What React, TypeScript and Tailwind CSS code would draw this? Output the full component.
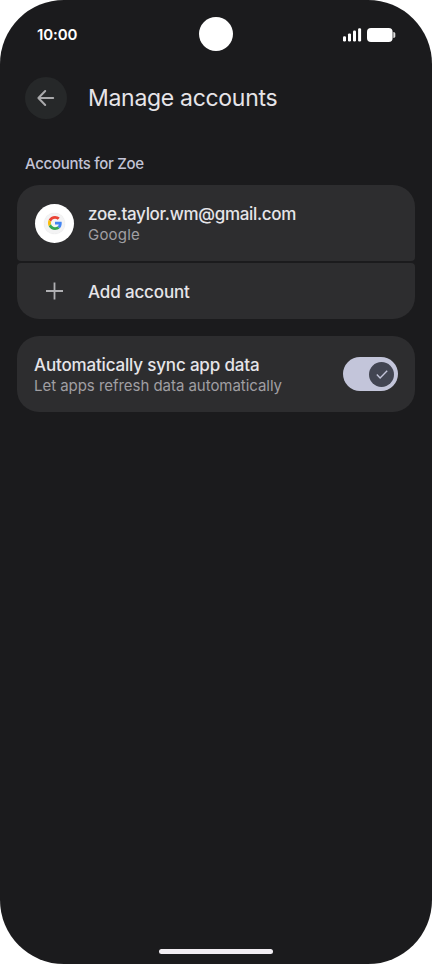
const StatusBar = () => (
  <div className="grid h-[34px] grid-cols-3 items-center pl-[37px] pr-[36px]">
    <span className="pt-0.5 text-[15px] font-semibold tracking-[-0.1px] text-white">10:00</span>
    <div className="size-[34px] justify-self-center rounded-full bg-white" />
    <div className="flex items-center justify-end gap-[5px] pt-px">
      <svg width="19" height="14" viewBox="0 0 19 14" fill="#fff">
        <rect x="0" y="8.2" width="3" height="5.2" rx="1.2" />
        <rect x="5" y="5.4" width="3" height="8" rx="1.2" />
        <rect x="10" y="2.6" width="3" height="10.8" rx="1.2" />
        <rect x="15.1" y="0.3" width="3" height="13.1" rx="1.2" />
      </svg>
      <svg width="29" height="14" viewBox="0 0 29 14" fill="#fff">
        <rect x="0" y="0" width="25.6" height="14" rx="4" />
        <path d="M26.3 4v6c1.4-.1 2-.8 2-1.8V5.8c0-1-.6-1.7-2-1.8z" opacity="0.85" />
      </svg>
    </div>
  </div>
)

const GoogleLogo = () => (
  <svg width="14" height="14" viewBox="0 0 48 48">
    <path fill="#EA4335" d="M24 9.5c3.54 0 6.71 1.22 9.21 3.6l6.85-6.85C35.9 2.38 30.47 0 24 0 14.62 0 6.51 5.38 2.56 13.22l7.98 6.19C12.43 13.72 17.74 9.5 24 9.5z" />
    <path fill="#4285F4" d="M46.98 24.55c0-1.57-.15-3.09-.38-4.55H24v9.02h12.94c-.58 2.96-2.26 5.48-4.78 7.18l7.73 6c4.51-4.18 7.09-10.36 7.09-17.65z" />
    <path fill="#FBBC05" d="M10.53 28.59c-.48-1.45-.76-2.99-.76-4.59s.27-3.14.76-4.59l-7.98-6.19C.92 16.46 0 20.12 0 24c0 3.88.92 7.54 2.56 10.78l7.97-6.19z" />
    <path fill="#34A853" d="M24 48c6.48 0 11.93-2.13 15.89-5.81l-7.73-6c-2.15 1.45-4.92 2.3-8.16 2.3-6.26 0-11.57-4.22-13.47-9.91l-7.98 6.19C6.51 42.62 14.62 48 24 48z" />
  </svg>
)

const App = () => {
  return (
    <div className="min-h-screen bg-white">
      <div className="flex h-[964px] w-[432px] flex-col overflow-hidden rounded-[64px] bg-[#1b1b1d] pt-[17px] font-['Inter',sans-serif]">
        <StatusBar />

        <header className="mt-[26px] flex items-center gap-[21px] pl-[25px]">
          <button className="flex size-[42px] items-center justify-center rounded-full bg-[#262829]">
            <svg width="18" height="18" viewBox="0 0 18 18" fill="none" stroke="#a9a9ab" strokeWidth="2" strokeLinecap="round" strokeLinejoin="round">
              <path d="M16.2 9H1.6M8.2 2L1.4 9l6.8 7" />
            </svg>
          </button>
          <h1 className="text-[23px] leading-[30px] tracking-[-0.3px] text-[#e6e4e8]">Manage accounts</h1>
        </header>

        <h2 className="mt-[35px] pl-[25px] text-[15px] leading-5 font-medium tracking-[-0.3px] text-[#c2c3d6]">Accounts for Zoe</h2>

        <div className="mx-[17px] mt-[11px] flex flex-col gap-[2px]">
          <div className="flex h-[76px] items-center gap-[14px] rounded-t-[22px] rounded-b-[4px] bg-[#2d2d2f] pl-[18px]">
            <div className="flex size-[39px] items-center justify-center rounded-full bg-white">
              <div className="flex size-[21px] items-center justify-center rounded-full bg-[#f3f3f4] shadow-[0_0_1px_rgba(0,0,0,0.15)]">
                <GoogleLogo />
              </div>
            </div>
            <div className="pt-0.5">
              <p className="text-[17px] leading-[22px] font-medium tracking-[-0.3px] text-[#e6e5e9]">zoe.taylor.wm@gmail.com</p>
              <p className="text-[15px] leading-5 tracking-[0.2px] text-[#a09fa3]">Google</p>
            </div>
          </div>
          <button className="flex h-[56px] items-center gap-[24px] rounded-t-[4px] rounded-b-[22px] bg-[#2d2d2f] pl-[28px]">
            <svg width="19" height="18" viewBox="0 0 19 18" stroke="#b0b0b3" strokeWidth="1.8">
              <path d="M9.5 0.5v17M1 9h17" />
            </svg>
            <span className="pt-px text-[17px] leading-[22px] font-medium tracking-[-0.14px] text-[#e6e5e9]">Add account</span>
          </button>
        </div>

        <div className="mx-[17px] mt-[17px] flex h-[76px] items-center justify-between rounded-[22px] bg-[#2d2d2f] px-[17px]">
          <div className="pt-0.5">
            <p className="text-[17px] leading-[22px] font-medium tracking-[-0.17px] text-[#e6e5e9]">Automatically sync app data</p>
            <p className="text-[15px] leading-5 tracking-[-0.04px] text-[#a09fa3]">Let apps refresh data automatically</p>
          </div>
          <button role="switch" aria-checked="true" className="flex h-[34px] w-[55px] items-center justify-end rounded-full bg-[#c3c5da] pr-1">
            <span className="flex size-[25px] items-center justify-center rounded-full bg-[#424552]">
              <svg width="12" height="9" viewBox="0 0 12 9" fill="none" stroke="#c3c5da" strokeWidth="1.4">
                <path d="M0.8 4.6l3.3 3.3L11.2 0.8" />
              </svg>
            </span>
          </button>
        </div>

        <div className="mt-auto mb-[10px] h-[5px] w-[114px] self-center rounded-full bg-[#f1edf2]" />
      </div>
    </div>
  )
}

export default App
